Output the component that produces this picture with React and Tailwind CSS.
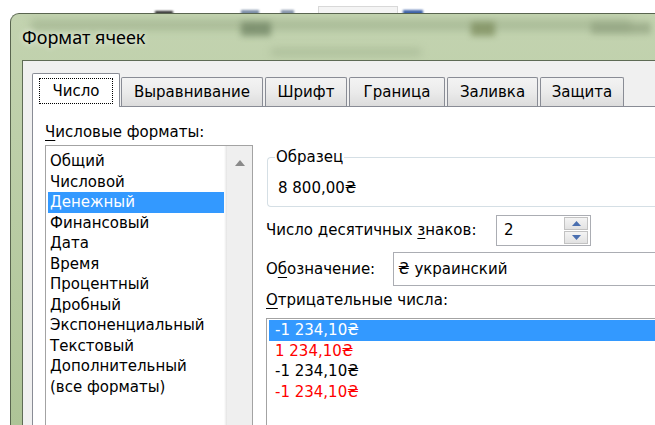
import React from "react";

const formats = [
  "Общий",
  "Числовой",
  "Денежный",
  "Финансовый",
  "Дата",
  "Время",
  "Процентный",
  "Дробный",
  "Экспоненциальный",
  "Текстовый",
  "Дополнительный",
  "(все форматы)",
];

const negatives = [
  { text: "-1 234,10₴", cls: "text-white bg-[#3399ff]" },
  { text: "1 234,10₴", cls: "text-[#ff0000]" },
  { text: "-1 234,10₴", cls: "text-black" },
  { text: "-1 234,10₴", cls: "text-[#ff0000]" },
];

const tabs = [
  { label: "Выравнивание", w: "w-[142px]" },
  { label: "Шрифт", w: "w-[82px]" },
  { label: "Граница", w: "w-[96px]" },
  { label: "Заливка", w: "w-[91px]" },
  { label: "Защита", w: "w-[84px]" },
];

function Tab({ label, w }) {
  return (
    <div
      className={`${w} shrink-0 h-[29px] flex items-center justify-center border border-b-0 border-[#898c95] bg-gradient-to-b from-[#f3f3f3] via-[#ebebeb] to-[#dcdcdc] rounded-t-[2px]`}
    >
      {label}
    </div>
  );
}

function Spin() {
  return (
    <div className="w-[24px] h-[27px] flex flex-col gap-[1px]">
      <div className="flex-1 flex items-center justify-center border border-[#c2c2c2] bg-gradient-to-b from-[#f4f4f4] to-[#e2e2e2]">
        <svg width="9" height="5" viewBox="0 0 9 5">
          <path d="M0 5 L4.5 0 L9 5 Z" fill="#4a6fb0" />
        </svg>
      </div>
      <div className="flex-1 flex items-center justify-center border border-[#c2c2c2] bg-gradient-to-b from-[#f4f4f4] to-[#e2e2e2]">
        <svg width="9" height="5" viewBox="0 0 9 5">
          <path d="M0 0 L9 0 L4.5 5 Z" fill="#4a6fb0" />
        </svg>
      </div>
    </div>
  );
}

export default function App() {
  return (
    <div className="w-[655px] h-[425px] overflow-hidden bg-white relative font-['DejaVu_Sans',sans-serif] text-[15px] text-black">
      {/* desktop strip above the window */}
      <div className="h-[13px] relative">
        <div className="absolute left-[155px] top-[11px] w-[18px] h-[3px] bg-[#222] blur-[1px]" />
        <div className="absolute left-[241px] top-[10px] w-[18px] h-[5px] bg-[#7d8fa8] blur-[1px]" />
        <div className="absolute left-[281px] top-[10px] w-[13px] h-[5px] bg-[#8796ab] blur-[1px]" />
        <div className="absolute left-[318px] top-[6px] w-[80px] h-[8px] border border-[#d8d8d8] bg-[#f4f4f4]" />
        <div className="absolute left-[403px] top-[10px] w-[20px] h-[5px] bg-[#3f63a8] blur-[1px]" />
      </div>

      {/* dialog window */}
      <div className="ml-[10px] h-[412px] overflow-hidden rounded-tl-[9px] border-l border-t border-[#59654f] bg-gradient-to-b from-[#c3d3b0] via-[#b9cca4] to-[#aec497] flex flex-col relative">
        {/* blurred glass shapes */}
        <div className="absolute left-[20px] top-[6px] w-[600px] h-[10px] bg-[#8fa37e] opacity-50 blur-[4px]" />
        <div className="absolute left-[230px] top-[8px] w-[30px] h-[14px] bg-[#5f7454] opacity-60 blur-[3px]" />
        <div className="absolute left-[460px] top-[8px] w-[24px] h-[14px] bg-[#6f7f4c] opacity-60 blur-[3px]" />
        <div className="absolute left-[260px] top-[35px] w-[150px] h-[6px] bg-[#8fa27e] opacity-50 blur-[4px]" />
        <div className="absolute left-[580px] top-[8px] w-[60px] h-[12px] bg-[#8a9b79] opacity-60 blur-[3px]" />

        <div className="h-[46px] shrink-0 pl-[11px] flex items-center relative">
          <span className="font-['Noto_Sans',sans-serif] text-[18px] text-black [text-shadow:0_0_6px_rgba(255,255,255,0.9)]">
            Формат ячеек
          </span>
        </div>

        <div className="ml-[11px] flex-1 min-h-0 overflow-hidden border-l border-t border-[#5e6b55] bg-[#f0f0f0] pl-[9px] pt-[12px] flex flex-col relative">
          {/* tab strip */}
          <div className="flex items-end gap-[2px] h-[33px] shrink-0">
            <div className="w-[88px] shrink-0 h-[34px] -mb-px mr-[-1px] relative z-10 bg-white border border-b-0 border-[#898c95] rounded-t-[2px] flex items-start justify-center pt-[4px]">
              <div className="w-[74px] h-[26px] border border-dotted border-black flex items-center justify-center">
                Число
              </div>
            </div>
            {tabs.map((t) => (
              <Tab key={t.label} {...t} />
            ))}
          </div>

          {/* tab page */}
          <div className="flex-1 min-h-0 bg-white border-l border-t border-[#898c95] pl-[12px] pt-[15px] flex">
            {/* left column */}
            <div className="w-[208px] shrink-0 flex flex-col">
              <div className="leading-[20px] h-[20px] shrink-0">
                <span className="underline underline-offset-[3px]">Ч</span>исловые форматы:
              </div>
              <div className="mt-[3px] h-[300px] shrink-0 border border-[#a3a3a3] flex">
                <div className="flex-1 pl-[2px] pt-[5px]">
                  {formats.map((f) => (
                    <div
                      key={f}
                      className={`h-[20.5px] leading-[20.5px] pl-[2px] ${
                        f === "Денежный" ? "bg-[#3399ff] text-white" : ""
                      }`}
                    >
                      {f}
                    </div>
                  ))}
                </div>
                <div className="w-[28px] flex">
                  <div className="w-[3px] bg-gradient-to-r from-white to-[#e3e3e3]" />
                  <div className="flex-1 bg-[#efefef] flex justify-center pt-[14px]">
                    <svg width="10" height="6" viewBox="0 0 10 6">
                      <path d="M0 6 L5 0 L10 6 Z" fill="#8a8a8a" />
                    </svg>
                  </div>
                </div>
              </div>
            </div>

            {/* right column */}
            <div className="ml-[13px] flex-1 flex flex-col">
              {/* sample group */}
              <div className="mt-[35px] ml-[1px] h-[50px] shrink-0 border border-r-0 border-[#d5dfe5] rounded-l-[4px] relative pl-[10px] pt-[20px] leading-[20px]">
                <div className="absolute left-[7px] -top-[11px] bg-white px-[1px] leading-[20px]">
                  Образец
                </div>
                8 800,00₴
              </div>

              {/* decimals */}
              <div className="mt-[8px] flex items-center h-[31px] shrink-0">
                <div className="w-[230px]">
                  Число десятичных <span className="underline underline-offset-[3px]">з</span>наков:
                </div>
                <div className="w-[95px] h-[31px] border border-[#abadb3] flex items-center justify-between pl-[7px] pr-[2px]">
                  <span>2</span>
                  <Spin />
                </div>
              </div>

              {/* symbol */}
              <div className="mt-[6px] flex items-center h-[34px] shrink-0">
                <div className="w-[127px]">
                  О<span className="underline underline-offset-[3px]">б</span>означение:
                </div>
                <div className="flex-1 h-[34px] border border-r-0 border-[#abadb3] flex items-center pl-[4px]">
                  ₴ украинский
                </div>
              </div>

              {/* negatives */}
              <div className="mt-[4px] leading-[20px] h-[20px] shrink-0">
                <span className="underline underline-offset-[3px]">О</span>трицательные числа:
              </div>
              <div className="mt-[8px] h-[200px] shrink-0 border border-r-0 border-[#a3a3a3] pl-[2px] pt-[1px]">
                {negatives.map((n, i) => (
                  <div key={i} className={`h-[20.5px] leading-[20.5px] pl-[6px] ${n.cls}`}>
                    {n.text}
                  </div>
                ))}
              </div>
            </div>
          </div>
        </div>
      </div>
    </div>
  );
}
